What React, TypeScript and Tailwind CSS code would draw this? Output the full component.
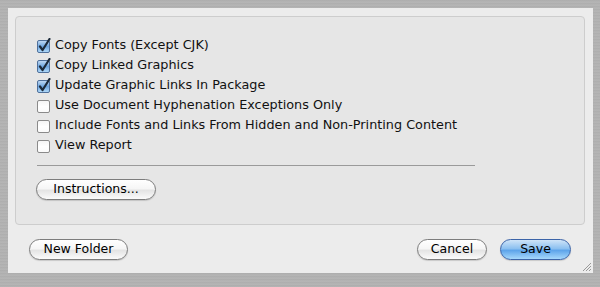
import React from 'react';

const font = { fontFamily: '"DejaVu Sans", "Liberation Sans", sans-serif' };

const options = [
  { label: 'Copy Fonts (Except CJK)', checked: true },
  { label: 'Copy Linked Graphics', checked: true },
  { label: 'Update Graphic Links In Package', checked: true },
  { label: 'Use Document Hyphenation Exceptions Only', checked: false },
  { label: 'Include Fonts and Links From Hidden and Non-Printing Content', checked: false },
  { label: 'View Report', checked: false },
];

const CheckBox = ({ checked }: { checked: boolean }) => (
  <svg width="15" height="15" viewBox="0 0 15 15" className="shrink-0">
    <defs>
      <linearGradient id="aqua" x1="0" y1="0" x2="0" y2="1">
        <stop offset="0" stopColor="#c4dcf4" />
        <stop offset="0.5" stopColor="#6ea6e0" />
        <stop offset="1" stopColor="#b4dcfa" />
      </linearGradient>
      <linearGradient id="plain" x1="0" y1="0" x2="0" y2="1">
        <stop offset="0" stopColor="#f4f4f4" />
        <stop offset="0.5" stopColor="#ffffff" />
        <stop offset="1" stopColor="#fafafa" />
      </linearGradient>
    </defs>
    <rect
      x="1.5"
      y="2.5"
      width="12"
      height="12"
      rx="1.5"
      fill={checked ? 'url(#aqua)' : 'url(#plain)'}
      stroke={checked ? '#50709a' : '#8a8a8a'}
    />
    {checked && (
      <path d="M4 8.5 L6.6 12 L13.5 1" fill="none" stroke="#1c2a3a" strokeWidth="2.2" strokeLinecap="round" strokeLinejoin="round" />
    )}
  </svg>
);

const PillButton = ({ children, className = '', primary = false }: { children: React.ReactNode; className?: string; primary?: boolean }) => (
  <button
    className={
      'h-[21px] rounded-full border text-[12.5px] leading-none text-black flex items-center justify-center shadow-[0_1px_1px_rgba(0,0,0,0.15)] ' +
      (primary
        ? 'border-[#3c64a8] bg-[linear-gradient(#cfe4f8_0%,#8cc0f0_45%,#5ea4ea_55%,#a6d8fc_100%)] '
        : 'border-[#7d7d7d] bg-[linear-gradient(#ffffff_0%,#f6f6f6_45%,#e4e4e4_55%,#fbfbfb_100%)] ') +
      className
    }
    style={font}
  >
    {children}
  </button>
);

export default function App() {
  return (
    <div className="w-[600px] h-[287px] overflow-hidden bg-[repeating-linear-gradient(180deg,#b4b4b4_0px,#a9a9a9_1px,#bcbcbc_2px,#adadad_3px)] pt-2 px-2">
      <div className="relative w-[585px] h-[265px] bg-[#ececec] pt-2 px-[7px]" style={font}>
        <div className="w-[570px] h-[209px] bg-[#e6e6e6] border border-[#cdcdcd] rounded-[4px] pt-[18px] pl-[20px]">
          <div className="flex flex-col">
            {options.map((o) => (
              <div key={o.label} className="h-[20px] flex items-center gap-[4px] text-[12.8px] text-[#111]">
                <CheckBox checked={o.checked} />
                <span>{o.label}</span>
              </div>
            ))}
          </div>
          <div className="mt-[10px] ml-[1px] w-[438px] h-px bg-[#9a9a9a]" />
          <PillButton className="mt-[13px] w-[120px]">Instructions...</PillButton>
        </div>
        <div className="flex items-center mt-[14px] pl-[14px] pr-[15px]">
          <PillButton className="w-[99px]">New Folder</PillButton>
          <div className="flex-1" />
          <PillButton className="w-[70px]">Cancel</PillButton>
          <PillButton primary className="w-[71px] ml-[13px]">Save</PillButton>
        </div>
        <svg width="10" height="10" viewBox="0 0 10 10" className="absolute right-[1px] bottom-[1px]">
          <path d="M1 9 L9 1 M4 9 L9 4 M7 9 L9 7" stroke="#999" strokeWidth="1" />
        </svg>
      </div>
    </div>
  );
}
